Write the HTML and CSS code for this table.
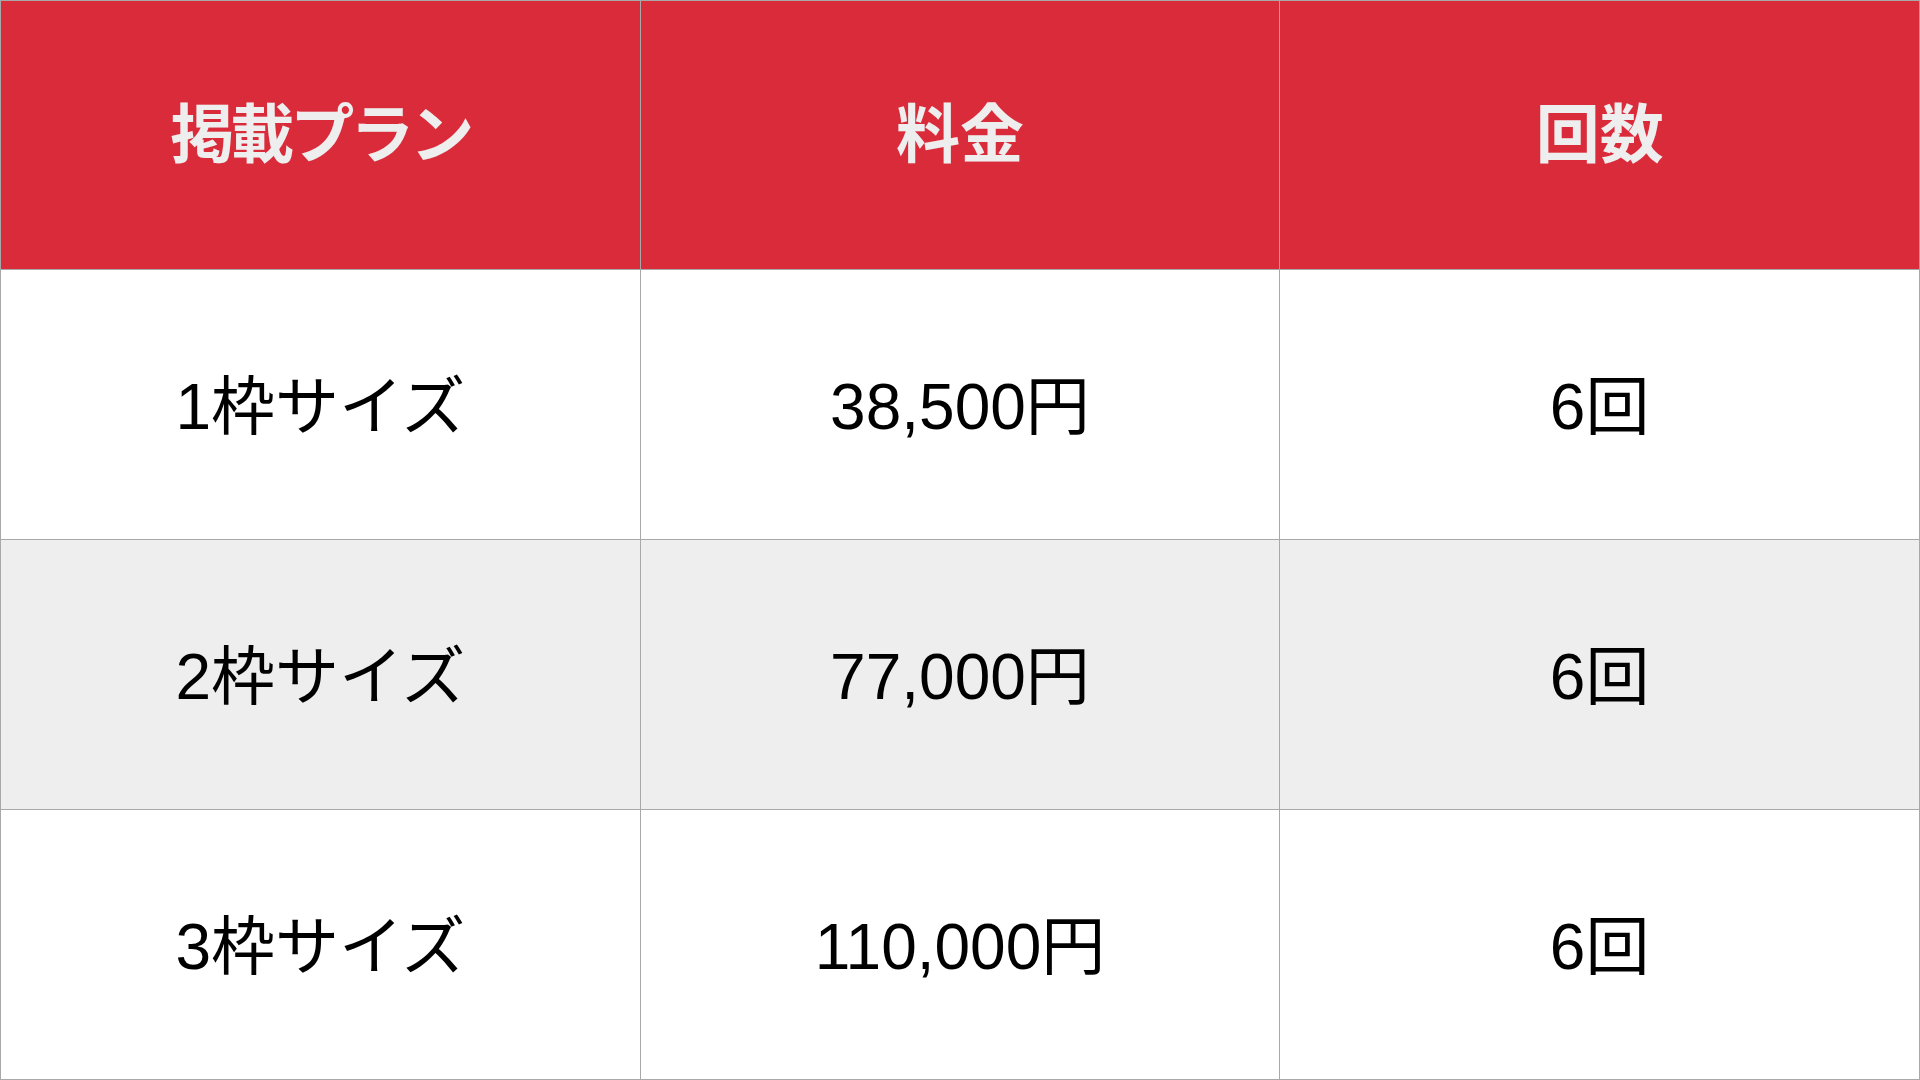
FILE: index.html
```html
<!DOCTYPE html>
<html lang="ja">
<head>
<meta charset="utf-8">
<link rel="stylesheet" href="styles.css">
</head>
<body>
<table class="plan">
  <thead>
    <tr><th class="tight">掲載プラン</th><th>料金</th><th>回数</th></tr>
  </thead>
  <tbody>
    <tr><td>1枠サイズ</td><td>38,500円</td><td>6回</td></tr>
    <tr class="alt"><td>2枠サイズ</td><td>77,000円</td><td>6回</td></tr>
    <tr><td>3枠サイズ</td><td>110,000円</td><td>6回</td></tr>
  </tbody>
</table>
</body>
</html>
```

FILE: styles.css
```css
html, body {
  margin: 0;
  padding: 0;
  background: #ffffff;
}
.plan {
  width: 1920px;
  height: 1080px;
  border-collapse: collapse;
  table-layout: fixed;
  font-family: "Liberation Sans", "Noto Sans CJK JP", sans-serif;
}
.plan th, .plan td {
  border: 1px solid #a8a8a8;
  text-align: center;
  vertical-align: middle;
  padding: 0;
}
.plan th {
  height: 256px;
  background: #da2b3a;
  color: #eeeeee;
  font-family: "Noto Sans CJK JP", sans-serif;
  font-weight: 700;
  font-size: 64px;
  padding-bottom: 12px;
}
.plan th.tight {
  letter-spacing: -4px;
}
.plan td {
  height: 260px;
  color: #000000;
  font-size: 64px;
  font-weight: 400;
  padding-bottom: 8px;
}
.plan tr.alt td {
  background: #eeeeee;
}
```
